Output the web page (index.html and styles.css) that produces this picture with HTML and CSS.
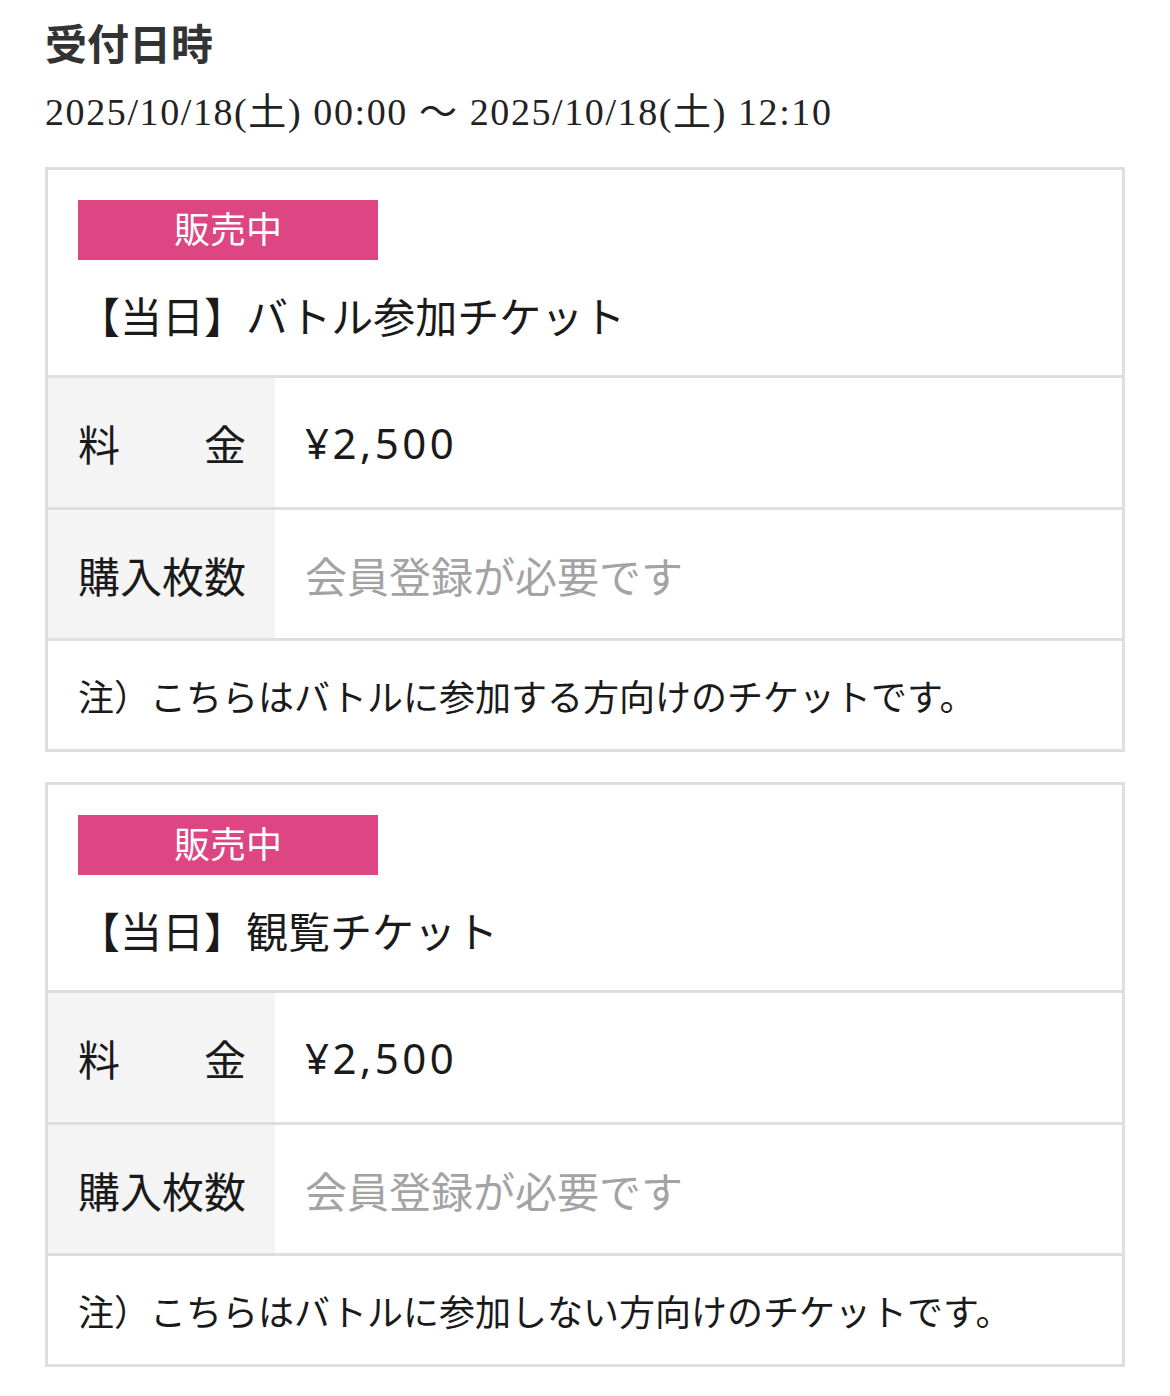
FILE: index.html
```html
<!DOCTYPE html>
<html lang="ja">
<head>
  <meta charset="UTF-8">
  <title>受付日時</title>
  <link rel="stylesheet" href="styles.css">
</head>
<body>
  <div class="page">
    <h2 class="section-title">受付日時</h2>
    <p class="period">2025/10/18(土) 00:00 〜 2025/10/18(土) 12:10</p>

    <div class="ticket">
      <div class="ticket-head">
        <div class="badge">販売中</div>
        <div class="ticket-name">【当日】バトル参加チケット</div>
      </div>
      <div class="ticket-row">
        <div class="row-label">料　　金</div>
        <div class="row-value price">¥2,500</div>
      </div>
      <div class="ticket-row">
        <div class="row-label">購入枚数</div>
        <div class="row-value muted">会員登録が必要です</div>
      </div>
      <div class="ticket-note">注）こちらはバトルに参加する方向けのチケットです。</div>
    </div>

    <div class="ticket">
      <div class="ticket-head">
        <div class="badge">販売中</div>
        <div class="ticket-name">【当日】観覧チケット</div>
      </div>
      <div class="ticket-row">
        <div class="row-label">料　　金</div>
        <div class="row-value price">¥2,500</div>
      </div>
      <div class="ticket-row">
        <div class="row-label">購入枚数</div>
        <div class="row-value muted">会員登録が必要です</div>
      </div>
      <div class="ticket-note">注）こちらはバトルに参加しない方向けのチケットです。</div>
    </div>
  </div>
</body>
</html>
```

FILE: styles.css
```css
    body {
      margin: 0;
      background: #fff;
      color: #1a1a1a;
      font-family: "Noto Sans", "Noto Sans CJK JP", sans-serif;
    }

    .page {
      padding: 12px 45px 30px;
    }

    .section-title {
      margin: 0;
      font-size: 42px;
      line-height: 63px;
      font-weight: bold;
      color: #333;
    }

    .period {
      margin: 6px 0 0;
      font-family: "Liberation Serif", "Noto Sans CJK JP", serif;
      font-size: 38px;
      letter-spacing: 1.6px;
      line-height: 63px;
      color: #222;
    }

    .ticket {
      margin-top: 23px;
      border: 3px solid #dedede;
    }

    .ticket + .ticket {
      margin-top: 30px;
    }

    .ticket-head {
      height: 205px;
      box-sizing: border-box;
      padding: 30px 30px 0;
    }

    .badge {
      width: 300px;
      height: 60px;
      line-height: 60px;
      background: #dd4682;
      color: #fff;
      font-size: 36px;
      text-align: center;
    }

    .ticket-name {
      margin-top: 27px;
      font-size: 42px;
      line-height: 60px;
      color: #1a1a1a;
    }

    .ticket-row {
      display: flex;
      height: 129px;
      border-top: 3px solid #dedede;
    }

    .ticket-row + .ticket-row {
      height: 128px;
    }

    .row-label {
      width: 227px;
      box-sizing: border-box;
      padding: 0 30px;
      background: #f4f4f4;
      display: flex;
      align-items: center;
      font-size: 42px;
      white-space: nowrap;
    }

    .row-value {
      flex: 1;
      padding: 0 30px;
      display: flex;
      align-items: center;
      font-size: 42px;
    }

    .price {
      letter-spacing: 3.5px;
    }

    .muted {
      color: #a3a3a3;
    }

    .ticket-note {
      height: 108px;
      border-top: 3px solid #dedede;
      padding: 0 30px;
      display: flex;
      align-items: center;
      font-size: 36px;
    }
```
